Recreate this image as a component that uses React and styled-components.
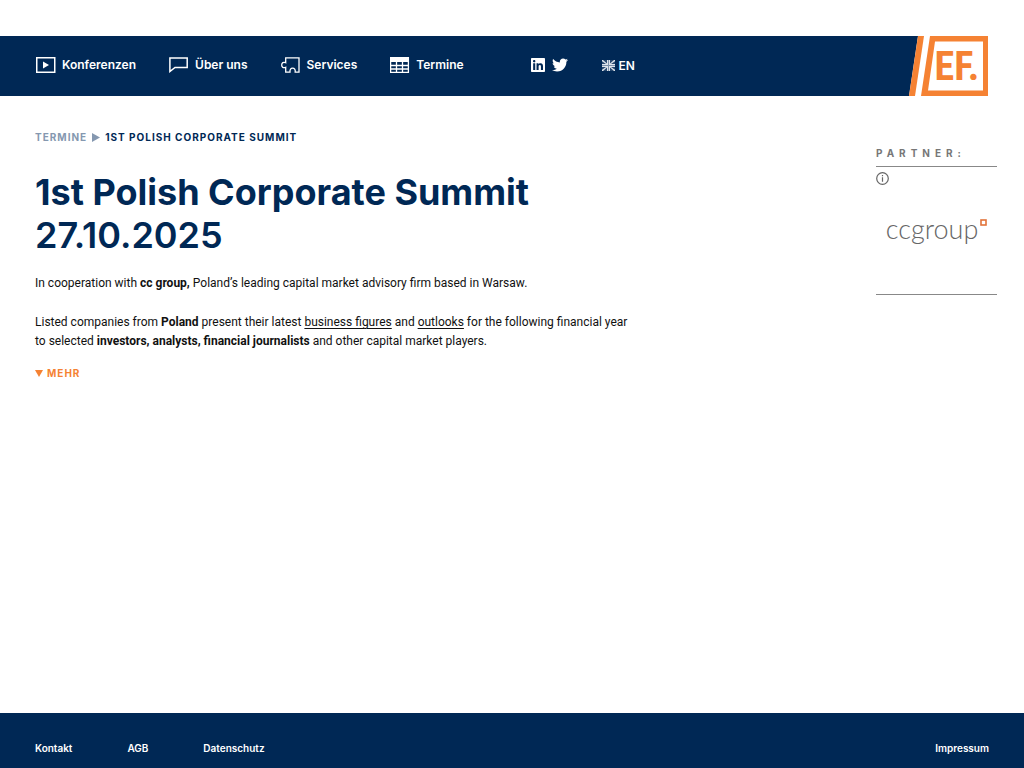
import { FaLinkedin, FaTwitter } from "react-icons/fa"
import styled, { createGlobalStyle } from "styled-components"


export default function App(){
    return (
        <>
        <GlobalStyle/>
        <Page>
            <HeaderComponent/>
            <Main>
                <EventComponent/>
                <PartnerComponent/>
            </Main>
            <FooterComponent/>
        </Page>
        </>
    )
}

function HeaderComponent(){
    return (
        <Header>
            <Nav>
                <NavLink href="#konferenzen"><PlayIcon/>Konferenzen</NavLink>
                <NavLink href="#ueber-uns"><SpeechIcon/>Über uns</NavLink>
                <NavLink href="#services"><PuzzleIcon/>Services</NavLink>
                <NavLink href="#termine"><TableIcon/>Termine</NavLink>
            </Nav>
            <Social>
                <a href="#linkedin" aria-label="LinkedIn"><FaLinkedin size={16}/></a>
                <a href="#twitter" aria-label="Twitter"><FaTwitter size={16}/></a>
            </Social>
            <LanguageLink href="#en"><FlagIcon/>EN</LanguageLink>
            <LogoLink href="#home" aria-label="EF."><Logo/></LogoLink>
        </Header>
    )
}

function EventComponent(){
    return (
        <Event>
            <Breadcrumb>
                <a href="#termine">TERMINE</a>
                <svg width="8" height="9" viewBox="0 0 8 9"><path d="M0 0L8 4.500L0 9Z" fill="#8598b0"/></svg>
                <span>1ST POLISH CORPORATE SUMMIT</span>
            </Breadcrumb>
            <Title>1st Polish Corporate Summit</Title>
            <EventDate>27.10.2025</EventDate>
            <Text>
                In cooperation with <b>cc group,</b> Poland’s leading capital market advisory firm based in Warsaw.
            </Text>
            <Text>
                Listed companies from <b>Poland</b> present their latest <u>business figures</u> and <u>outlooks</u> for the following financial year
                <br/>
                to selected <b>investors, analysts, financial journalists</b> and other capital market players.
            </Text>
            <MoreButton type="button">
                <svg width="8" height="7" viewBox="0 0 8 7"><path d="M0 0H8L4 7Z" fill="currentColor"/></svg>
                MEHR
            </MoreButton>
        </Event>
    )
}

function PartnerComponent(){
    return (
        <Partner>
            <h2>PARTNER:</h2>
            <PartnerCard>
                <InfoButton type="button" aria-label="Info"><InfoIcon/></InfoButton>
                <PartnerLink href="#ccgroup">
                    ccgroup
                    <svg width="7" height="7" viewBox="0 0 7 7"><rect x="1" y="1" width="5" height="5" fill="none" stroke="#e2733a" strokeWidth="1.600"/></svg>
                </PartnerLink>
            </PartnerCard>
        </Partner>
    )
}

function FooterComponent(){
    return (
        <Footer>
            <a href="#kontakt">Kontakt</a>
            <a href="#agb">AGB</a>
            <a href="#datenschutz">Datenschutz</a>
            <a href="#impressum">Impressum</a>
        </Footer>
    )
}

function PlayIcon(){
    return (
        <svg width="20" height="16" viewBox="0 0 20 16">
            <rect x="0.750" y="0.750" width="18" height="14.500" fill="none" stroke="#fff" strokeWidth="1.500"/>
            <path d="M7 4.500L13 8L7 11.500Z" fill="#fff"/>
        </svg>
    )
}

function SpeechIcon(){
    return (
        <svg width="20" height="16" viewBox="0 0 20 16">
            <path d="M0.900 1H18.200V10.500H6L0.900 14.500Z" fill="none" stroke="#fff" strokeWidth="1.500"/>
        </svg>
    )
}

function PuzzleIcon(){
    return (
        <svg width="20" height="16" viewBox="0 0 20 16">
            <path d="M4.700 0.800H18V15.200H14.200C14.600 12.300 13.300 11.200 11.600 11.200S8.700 12.300 9 15.200H4.700V10.300C2.300 11.300 0.700 10.200 0.700 8S2.300 4.700 4.700 5.700Z" fill="none" stroke="#fff" strokeWidth="1.300"/>
        </svg>
    )
}

function TableIcon(){
    return (
        <svg width="20" height="16" viewBox="0 0 20 16">
            <path d="M0.600 0.600H18.400V15.400H0.600ZM0.600 8.500H18.400M0.600 12H18.400M6.500 4V15.400M12.500 4V15.400" fill="none" stroke="#fff" strokeWidth="1.300"/>
            <rect width="19" height="5" fill="#fff"/>
        </svg>
    )
}

function FlagIcon(){
    return (
        <svg width="13" height="11" viewBox="0 0 13 11">
            <rect width="13" height="11" fill="#dfe5ec"/>
            <path d="M1 0H5L5 3.500ZM12 0H8V3.500ZM1 11H5V7.500ZM12 11H8V7.500ZM0 1.200V4H4ZM13 1.200V4H9ZM0 9.800V7H4ZM13 9.800V7H9Z" fill="#28496f"/>
            <path d="M6.500 0V11M0 5.500H13" stroke="#7f93ab" strokeWidth="1"/>
        </svg>
    )
}

function InfoIcon(){
    return (
        <svg width="13" height="13" viewBox="0 0 13 13">
            <circle cx="6.500" cy="6.500" r="5.800" fill="none" stroke="#666" strokeWidth="1.200"/>
            <path d="M6.500 5.300V9.800M6.500 3V4.300" stroke="#666" strokeWidth="1.200"/>
        </svg>
    )
}

function Logo(){
    return (
        <svg width="116" height="60" viewBox="0 0 116 60">
            <path d="M10 0H116V60H1Z" fill="#fff"/>
            <path d="M10 0H16L7 60H1Z" fill="#f58233"/>
            <path d="M22 0H80V60H13ZM27 5.500L20 54.500H75V5.500Z" fill="#f58233" fillRule="evenodd"/>
            <text x="49" y="44" textAnchor="middle" fill="#f58233" fontFamily="'Roboto Condensed', 'Liberation Sans Narrow', Roboto, sans-serif" fontWeight="700" fontSize="40">EF.</text>
        </svg>
    )
}

const GlobalStyle = createGlobalStyle`
    body{
        margin: 0;
        background-color: #fff;
        color: #111;
        font-family: Inter, "Liberation Sans", sans-serif;
        font-size: 12px;
    }

    a{
        color: inherit;
        text-decoration: none;
    }

    button{
        padding: 0;
        border: none;
        background: none;
        font: inherit;
        cursor: pointer;
    }

    svg{
        display: block;
        flex-shrink: 0;
    }
`

const Page = styled.div`
    min-height: 100vh;
    display: flex;
    flex-direction: column;
    padding-top: 36px;
    box-sizing: border-box;
`

const Header = styled.header`
    height: 60px;
    padding-left: 36px;
    display: flex;
    align-items: center;
    background-color: #002855;
    color: #fff;
    font-weight: 600;
`

const Nav = styled.nav`
    display: flex;
    gap: 33px;
`

const NavLink = styled.a`
    display: flex;
    align-items: center;
    gap: 6px;
    line-height: 16px;
    padding-bottom: 3px;
`

const Social = styled.div`
    display: flex;
    gap: 6px;
    margin-left: 66px;
    padding-bottom: 2px;
`

const LanguageLink = styled.a`
    display: flex;
    align-items: center;
    gap: 4px;
    margin-left: 34px;
    padding-bottom: 2px;
`

const LogoLink = styled.a`
    margin-left: auto;
`

const Main = styled.main`
    flex: 1;
    display: flex;
    justify-content: space-between;
    align-items: flex-start;
    gap: 40px;
    padding: 32px 27px 40px 35px;
`

const Event = styled.article`
    flex: 1;
`

const Breadcrumb = styled.nav`
    display: flex;
    align-items: center;
    gap: 5px;
    color: #002855;
    font-size: 10px;
    font-weight: 700;
    letter-spacing: 1px;
    line-height: 18px;

    a{
        color: #8598b0;
    }
`

const Title = styled.h1`
    margin: 25px 0 0;
    color: #002855;
    font-size: 36px;
    font-weight: 700;
    line-height: 43px;
`

const EventDate = styled.div`
    color: #002855;
    font-size: 36px;
    font-weight: 600;
    line-height: 43px;
`

const Text = styled.p`
    margin: 17px 0 20px;
    font-family: Roboto, "Liberation Sans", sans-serif;
    line-height: 19px;

    b{
        font-weight: 700;
    }

    u{
        text-underline-offset: 2px;
    }
`

const MoreButton = styled.button`
    display: flex;
    align-items: center;
    gap: 4px;
    margin-top: -6px;
    color: #f58233;

    && {
        font-size: 10px;
        font-weight: 700;
        letter-spacing: 1px;
        line-height: 16px;
    }
`

const Partner = styled.aside`
    width: 121px;
    margin-top: 16px;

    h2{
        margin: 0;
        color: #777;
        font-size: 10px;
        font-weight: 700;
        letter-spacing: 5px;
        line-height: 18px;
    }
`

const PartnerCard = styled.div`
    height: 122px;
    margin-top: 4px;
    padding-top: 5px;
    border-top: 1px solid #888;
    border-bottom: 1px solid #888;
`

const InfoButton = styled.button`
    display: block;
`

const PartnerLink = styled.a`
    display: flex;
    justify-content: center;
    align-items: flex-start;
    gap: 2px;
    margin-top: 34px;
    color: #666;
    font-family: Lato, sans-serif;
    font-size: 27px;
    font-weight: 300;
    line-height: 20px;
`

const Footer = styled.footer`
    height: 55px;
    padding: 27px 35px 0;
    box-sizing: border-box;
    display: flex;
    gap: 55px;
    background-color: #002855;
    color: #fff;
    font-size: 10px;
    font-weight: 600;
    line-height: 16px;

    a:last-child{
        margin-left: auto;
    }
`
